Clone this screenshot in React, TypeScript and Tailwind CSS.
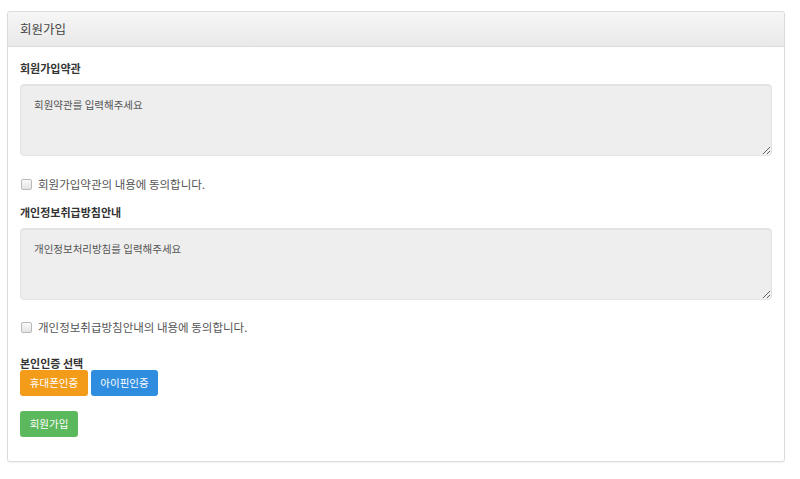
import { useState } from 'react';

const FONT = "font-['Noto_Sans_CJK_KR','Noto_Sans',sans-serif]";

const AgreeCheck = ({ label }: { label: string }) => {
  const [checked, setChecked] = useState(false);
  return (
    <label className="flex items-center h-4 gap-[6px] pl-[1px] text-[11.5px] leading-4 text-[#555] cursor-pointer select-none">
      <input
        type="checkbox"
        checked={checked}
        onChange={(e) => setChecked(e.target.checked)}
        className="appearance-none w-[11px] h-[11px] rounded-[2px] border border-[#b9b9b9] bg-gradient-to-b from-[#fafafa] to-[#e4e4e4] checked:bg-[#3b82f6]"
      />
      <span>{label}</span>
    </label>
  );
};

const Terms = ({ placeholder }: { placeholder: string }) => (
  <textarea
    placeholder={placeholder}
    className="block w-full h-[72px] rounded-[4px] border border-[#e2e2e2] bg-[#eeeeee] px-[13px] pt-[12px] text-[10.5px] leading-4 text-[#555] placeholder:text-[#555] shadow-[inset_0_1px_1px_rgba(0,0,0,0.05)] outline-none resize-y"
  />
);

export default function App() {
  return (
    <div className={`${FONT} min-h-[479px] bg-white pt-[11px] pl-[7px] pr-[15px]`}>
      <div className="rounded-[3px] border border-[#dcdcdc] bg-white shadow-[0_1px_2px_rgba(0,0,0,0.06)]">
        {/* Header */}
        <div className="h-[35px] flex items-center px-[12px] rounded-t-[3px] border-b border-[#dcdcdc] bg-gradient-to-b from-[#f6f6f6] to-[#e9e9e9] text-[12.5px] text-[#444]">
          회원가입
        </div>

        {/* Body */}
        <div className="flex flex-col px-[12px] pt-[13px] pb-[24px]">
          <h3 className="text-[11px] leading-4 font-bold text-[#333] mb-[8px]">회원가입약관</h3>
          <Terms placeholder="회원약관를 입력해주세요" />
          <div className="mt-[20px]">
            <AgreeCheck label="회원가입약관의 내용에 동의합니다." />
          </div>

          <h3 className="mt-[12px] text-[11px] leading-4 font-bold text-[#333] mb-[8px]">개인정보취급방침안내</h3>
          <Terms placeholder="개인정보처리방침를 입력해주세요" />
          <div className="mt-[19px]">
            <AgreeCheck label="개인정보취급방침안내의 내용에 동의합니다." />
          </div>

          <h3 className="mt-[21px] text-[11px] leading-[14px] font-bold text-[#333]">본인인증 선택</h3>
          <div className="flex gap-[3px]">
            <button className="h-[26px] w-[68px] rounded-[3px] bg-[#f39c1a] text-[10.5px] text-white">휴대폰인증</button>
            <button className="h-[26px] w-[67px] rounded-[3px] bg-[#2f8de0] text-[10.5px] text-white">아이핀인증</button>
          </div>
          <div className="mt-[13px]">
            <button className="h-[26px] w-[58px] rounded-[3px] bg-[#5cb85c] text-[10.5px] text-white">회원가입</button>
          </div>
        </div>
      </div>
    </div>
  );
}
